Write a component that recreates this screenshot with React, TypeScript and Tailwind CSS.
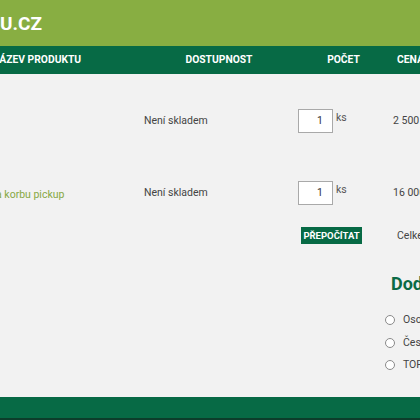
import React from "react";

const font = { fontFamily: "Roboto, 'Noto Sans', sans-serif" };

function QtyRow({ name, price }: { name: string; price: string }) {
  return (
    <div className="grid grid-cols-[144px_154px_95px_1fr] items-center h-[24px]">
      <div className="overflow-hidden whitespace-nowrap">
        <span className="text-[10.5px] text-[#86a843] -ml-[4px] inline-block">{name}</span>
      </div>
      <div className="text-[10.5px] text-[#444]">Není skladem</div>
      <div className="flex items-start h-[24px]">
        <div className="w-[35px] h-[24px] shrink-0 bg-white border border-[#a9a9a9] flex items-center justify-end pr-[9px] text-[10.5px] text-[#333]">1</div>
        <span className="ml-[3px] text-[10.5px] text-[#555] leading-[18px]">ks</span>
      </div>
      <div className="text-[10.5px] text-[#444] whitespace-nowrap">{price}</div>
    </div>
  );
}

function Radio({ label }: { label: string }) {
  return (
    <div className="flex items-center h-[22.5px] pl-[385px]">
      <div className="w-[10px] h-[10px] shrink-0 rounded-full border border-[#8a8a8a] bg-white" />
      <span className="ml-[8px] text-[10.5px] text-[#444] whitespace-nowrap">{label}</span>
    </div>
  );
}

export default function App() {
  return (
    <div className="w-[420px] h-[420px] overflow-hidden bg-[#f2f2f2] flex flex-col" style={font}>
      <div className="h-[46px] bg-[#88ae42] flex items-center shrink-0">
        <span className="text-white font-bold text-[19px] leading-none">U.CZ</span>
      </div>
      <div className="h-[28px] bg-[#076a45] grid grid-cols-[144px_154px_95px_1fr] items-center text-white font-bold text-[10.3px] shrink-0">
        <div className="overflow-hidden whitespace-nowrap"><span className="-ml-[8px] inline-block">NÁZEV PRODUKTU</span></div>
        <div className="text-center pr-[4px]">DOSTUPNOST</div>
        <div className="text-center pr-[4px]">POČET</div>
        <div className="pl-[4px] whitespace-nowrap">CENA</div>
      </div>
      <div className="flex flex-col pt-[35px]">
        <QtyRow name="" price="2 500 Kč" />
        <div className="h-[48px]" />
        <QtyRow name="a korbu pickup" price="16 000 Kč" />
        <div className="grid grid-cols-[301px_96px_1fr] items-center mt-[22px] h-[17px]">
          <div />
          <div>
            <button className="h-[17px] w-[61px] bg-[#076a45] text-white font-bold text-[9.5px] leading-none flex items-center justify-center">PŘEPOČÍTAT</button>
          </div>
          <div className="text-[10.5px] text-[#444] whitespace-nowrap">Celkem</div>
        </div>
        <div className="mt-[28px] pl-[391px] text-[18px] font-bold text-[#0b6b45] leading-[24px] whitespace-nowrap">Dodání</div>
        <div className="mt-[13px] flex flex-col">
          <Radio label="Osobní odběr" />
          <Radio label="Česká pošta" />
          <Radio label="TOP TRANS" />
        </div>
      </div>
      <div className="mt-auto h-[23px] bg-[#076a45] border-b-2 border-[#0c3d2b] shrink-0" />
    </div>
  );
}
